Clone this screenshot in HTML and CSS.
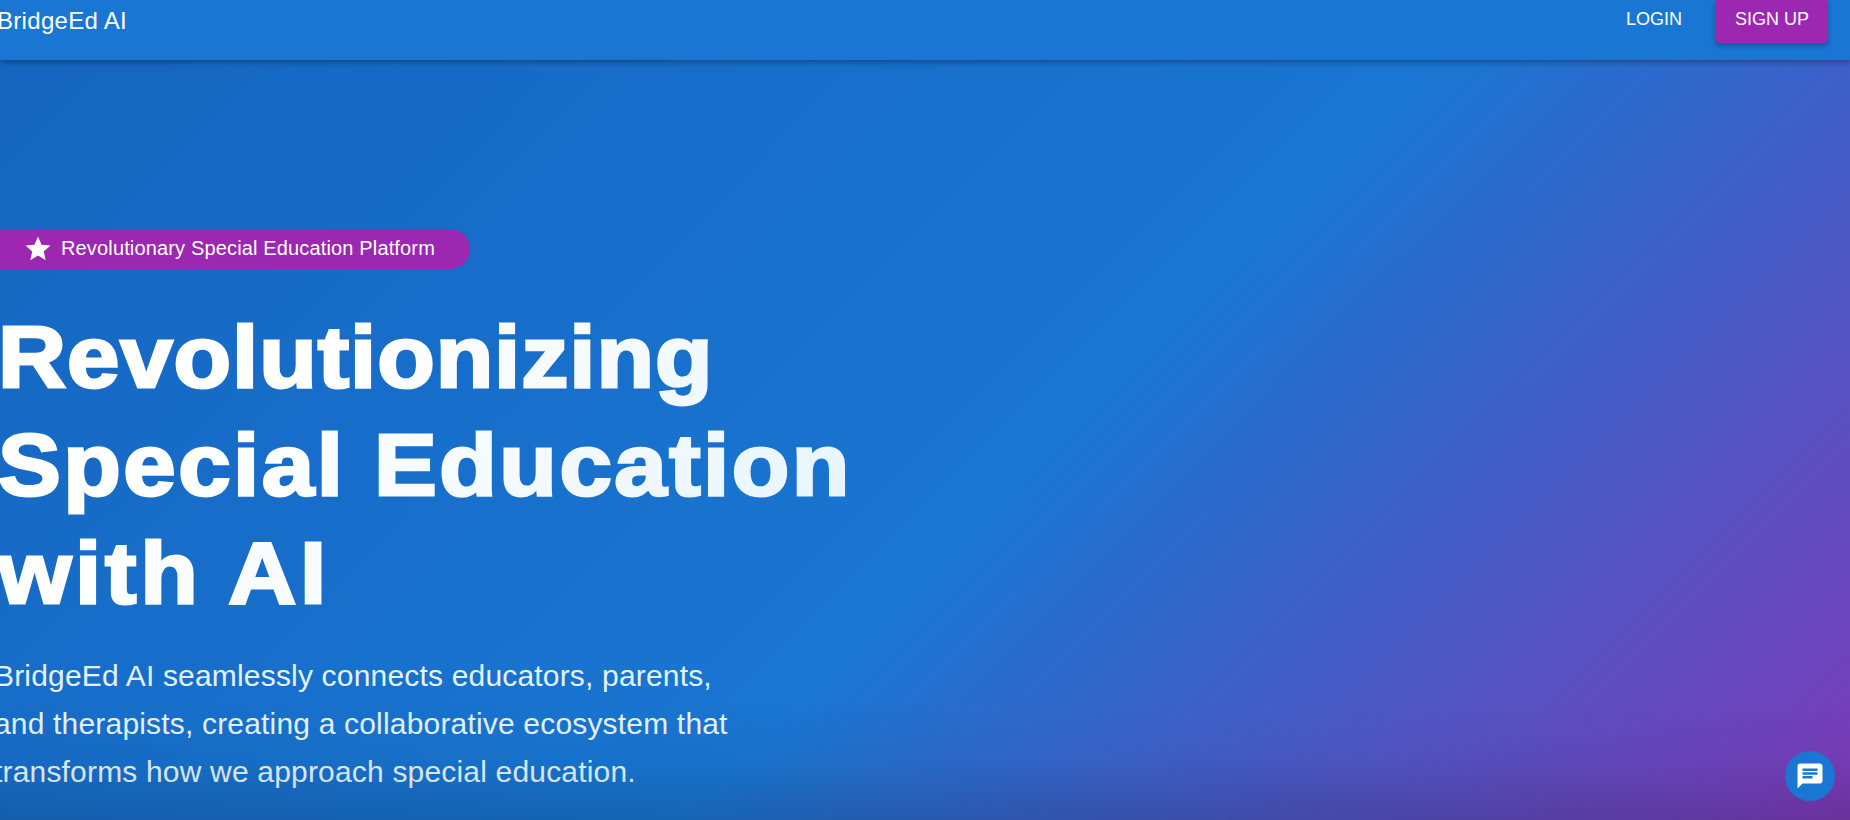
FILE: index.html
```html
<!DOCTYPE html>
<html lang="en">
<head>
    <meta charset="UTF-8">
    <meta name="viewport" content="width=device-width, initial-scale=1.0">
    <title>BridgeEd AI</title>
    <link rel="stylesheet" href="styles.css">
</head>
<body>
    <header class="appbar">
        <div class="brand">BridgeEd AI</div>
        <nav class="nav">
            <a class="nav-login" href="#">Login</a>
            <a class="nav-signup" href="#">Sign Up</a>
        </nav>
    </header>

    <main class="hero">
        <div class="badge">
            <svg class="badge-star" viewBox="0 0 24 24"><path d="M12 17.27 18.18 21l-1.64-7.03L22 9.24l-7.19-.61L12 2 9.19 8.63 2 9.24l5.46 4.73L5.82 21z"/></svg>
            <span>Revolutionary Special Education Platform</span>
        </div>
        <h1 class="hero-title">
            <span class="line-1">Revolutionizing</span>
            <span class="line-2">Special Education</span>
            <span class="line-3">with AI</span>
        </h1>
        <p class="hero-text">BridgeEd AI seamlessly connects educators, parents,<br>and therapists, creating a collaborative ecosystem that<br>transforms how we approach special education.</p>
    </main>

    <button class="chat-btn" type="button" aria-label="Chat">
        <svg viewBox="0 0 24 24"><path d="M20 2H4c-1.1 0-1.99.9-1.99 2L2 22l4-4h14c1.1 0 2-.9 2-2V4c0-1.1-.9-2-2-2zM6 9h12v2H6V9zm8 5H6v-2h8v2zm4-6H6V6h12v2z"/></svg>
    </button>
</body>
</html>
```

FILE: styles.css
```css
html, body {
    margin: 0;
    height: 100%;
    overflow: hidden;
}
body {
    font-family: "Liberation Sans", Arial, sans-serif;
    color: #fff;
    display: flex;
    flex-direction: column;
    background-color: #1976d2;
}
.appbar {
    position: relative;
    z-index: 2;
    flex: none;
    height: 60px;
    display: flex;
    justify-content: space-between;
    align-items: flex-start;
    background-color: #1976d2;
    box-shadow: 0 2px 6px rgba(0, 0, 0, 0.35);
}
.brand {
    margin-left: -3px;
    font-size: 24px;
    line-height: 41px;
    letter-spacing: 0.3px;
}
.nav {
    display: flex;
    align-items: center;
    gap: 33px;
    margin-right: 22px;
    height: 42px;
}
.nav a {
    color: #fff;
    font-size: 18px;
    text-decoration: none;
    text-transform: uppercase;
    padding-bottom: 3px;
}
.nav-login {
    color: #e3f2fd;
}
.nav-signup {
    display: flex;
    align-items: center;
    box-sizing: border-box;
    height: 43px;
    padding: 0 19px 3px 20px;
    background-color: #9c27b0;
    border-radius: 0 0 4px 4px;
    box-shadow: 0 3px 5px rgba(0, 0, 0, 0.25);
}
.hero {
    flex: 1;
    min-height: 0;
    position: relative;
    padding-top: 169px;
    background: linear-gradient(135deg, #1565c0 0%, #1976d2 55%, #9c27b0 114%);
}
.hero::after {
    content: "";
    position: absolute;
    left: 0;
    right: 0;
    bottom: 0;
    height: 120px;
    background: linear-gradient(to bottom, rgba(0, 0, 0, 0), rgba(0, 0, 0, 0.03) 50%, rgba(0, 0, 0, 0.15));
}
.badge {
    display: flex;
    align-items: center;
    gap: 8px;
    width: 470px;
    height: 40px;
    box-sizing: border-box;
    padding-left: 23px;
    padding-bottom: 1px;
    background-color: #9c27b0;
    border-radius: 0 20px 20px 0;
    font-size: 20px;
    letter-spacing: 0.15px;
}
.badge-star {
    width: 30px;
    height: 30px;
    fill: #fff;
}
.hero-title {
    margin: 34px 0 0 -2px;
    width: 800px;
    font-size: 88px;
    font-weight: 700;
    line-height: 108px;
    background: linear-gradient(135deg, #fff 30%, #e3f2fd 100%);
    -webkit-background-clip: text;
    background-clip: text;
    color: transparent;
    -webkit-text-stroke: 3px transparent;
    transform: scaleX(1.07);
    transform-origin: left center;
}
.hero-title span {
    display: block;
}
.line-1 {
    letter-spacing: 0.9px;
}
.line-2 {
    letter-spacing: 2.35px;
}
.line-3 {
    letter-spacing: 3.6px;
}
.hero-text {
    margin: 25px 0 0 -6px;
    font-size: 30px;
    line-height: 48px;
    letter-spacing: 0.18px;
    color: #e3f2fd;
}
.chat-btn {
    position: fixed;
    right: 15px;
    bottom: 19px;
    width: 50px;
    height: 50px;
    padding: 0;
    border: none;
    border-radius: 50%;
    background-color: #1976d2;
    display: flex;
    align-items: center;
    justify-content: center;
    z-index: 3;
}
.chat-btn svg {
    width: 30px;
    height: 30px;
    fill: #fff;
}
```
